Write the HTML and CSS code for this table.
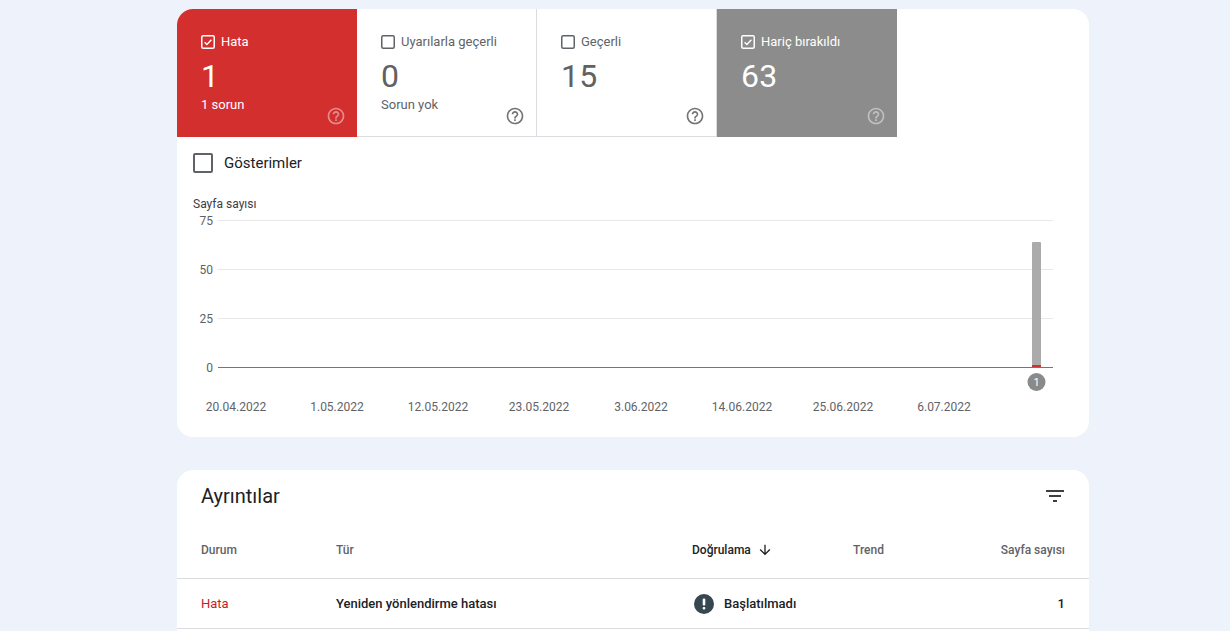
FILE: index.html
```html
<!DOCTYPE html>
<html lang="tr">
<head>
<meta charset="utf-8">
<title>Dizin kapsamı</title>
<link rel="stylesheet" href="styles.css">
</head>
<body>
<main class="page">
  <section class="card summary">
    <div class="tiles">
      <div class="tile tile-error">
        <div class="tile-label">
          <svg class="cb" viewBox="0 0 14 14"><rect x="0.75" y="0.75" width="12.5" height="12.5" rx="1.5" fill="none" stroke="currentColor" stroke-width="1.5"/><path d="M3.6 7.2l2.3 2.2 4.5-4.6" fill="none" stroke="currentColor" stroke-width="1.4"/></svg>
          <span>Hata</span>
        </div>
        <div class="tile-value">1</div>
        <div class="tile-foot">
          <span class="tile-sub">1 sorun</span>
          <svg class="help" viewBox="0 0 24 24"><path fill="currentColor" d="M11 18h2v-2h-2v2zm1-16C6.48 2 2 6.48 2 12s4.48 10 10 10 10-4.48 10-10S17.52 2 12 2zm0 18c-4.41 0-8-3.59-8-8s3.59-8 8-8 8 3.59 8 8-3.59 8-8 8zm0-14c-2.21 0-4 1.79-4 4h2c0-1.1.9-2 2-2s2 .9 2 2c0 2-3 1.75-3 5h2c0-2.25 3-2.5 3-5 0-2.21-1.79-4-4-4z"/></svg>
        </div>
      </div>
      <div class="tile tile-plain">
        <div class="tile-label">
          <svg class="cb" viewBox="0 0 14 14"><rect x="0.75" y="0.75" width="12.5" height="12.5" rx="1.5" fill="none" stroke="currentColor" stroke-width="1.5"/></svg>
          <span>Uyarılarla geçerli</span>
        </div>
        <div class="tile-value">0</div>
        <div class="tile-foot">
          <span class="tile-sub">Sorun yok</span>
          <svg class="help" viewBox="0 0 24 24"><path fill="currentColor" d="M11 18h2v-2h-2v2zm1-16C6.48 2 2 6.48 2 12s4.48 10 10 10 10-4.48 10-10S17.52 2 12 2zm0 18c-4.41 0-8-3.59-8-8s3.59-8 8-8 8 3.59 8 8-3.59 8-8 8zm0-14c-2.21 0-4 1.79-4 4h2c0-1.1.9-2 2-2s2 .9 2 2c0 2-3 1.75-3 5h2c0-2.25 3-2.5 3-5 0-2.21-1.79-4-4-4z"/></svg>
        </div>
      </div>
      <div class="tile tile-plain">
        <div class="tile-label">
          <svg class="cb" viewBox="0 0 14 14"><rect x="0.75" y="0.75" width="12.5" height="12.5" rx="1.5" fill="none" stroke="currentColor" stroke-width="1.5"/></svg>
          <span>Geçerli</span>
        </div>
        <div class="tile-value">15</div>
        <div class="tile-foot">
          <span class="tile-sub"></span>
          <svg class="help" viewBox="0 0 24 24"><path fill="currentColor" d="M11 18h2v-2h-2v2zm1-16C6.48 2 2 6.48 2 12s4.48 10 10 10 10-4.48 10-10S17.52 2 12 2zm0 18c-4.41 0-8-3.59-8-8s3.59-8 8-8 8 3.59 8 8-3.59 8-8 8zm0-14c-2.21 0-4 1.79-4 4h2c0-1.1.9-2 2-2s2 .9 2 2c0 2-3 1.75-3 5h2c0-2.25 3-2.5 3-5 0-2.21-1.79-4-4-4z"/></svg>
        </div>
      </div>
      <div class="tile tile-excluded">
        <div class="tile-label">
          <svg class="cb" viewBox="0 0 14 14"><rect x="0.75" y="0.75" width="12.5" height="12.5" rx="1.5" fill="none" stroke="currentColor" stroke-width="1.5"/><path d="M3.6 7.2l2.3 2.2 4.5-4.6" fill="none" stroke="currentColor" stroke-width="1.4"/></svg>
          <span>Hariç bırakıldı</span>
        </div>
        <div class="tile-value">63</div>
        <div class="tile-foot">
          <span class="tile-sub"></span>
          <svg class="help" viewBox="0 0 24 24"><path fill="currentColor" d="M11 18h2v-2h-2v2zm1-16C6.48 2 2 6.48 2 12s4.48 10 10 10 10-4.48 10-10S17.52 2 12 2zm0 18c-4.41 0-8-3.59-8-8s3.59-8 8-8 8 3.59 8 8-3.59 8-8 8zm0-14c-2.21 0-4 1.79-4 4h2c0-1.1.9-2 2-2s2 .9 2 2c0 2-3 1.75-3 5h2c0-2.25 3-2.5 3-5 0-2.21-1.79-4-4-4z"/></svg>
        </div>
      </div>
    </div>

    <label class="impressions">
      <span class="big-cb"></span>
      <span>Gösterimler</span>
    </label>

    <div class="chart">
      <div class="axis-title">Sayfa sayısı</div>
      <svg class="chart-svg" viewBox="0 0 880 210" width="880" height="210">
        <g class="grid">
          <line x1="25" y1="8.5" x2="860" y2="8.5"/>
          <line x1="25" y1="57.5" x2="860" y2="57.5"/>
          <line x1="25" y1="106.5" x2="860" y2="106.5"/>
        </g>
        <line class="zero" x1="25" y1="155.5" x2="860" y2="155.5"/>
        <g class="ylab">
          <text x="20" y="12.5">75</text>
          <text x="20" y="61.5">50</text>
          <text x="20" y="110.5">25</text>
          <text x="20" y="159.5">0</text>
        </g>
        <rect x="839" y="30" width="9" height="123" rx="1" fill="#ababab"/>
        <rect x="839" y="153" width="9" height="2" fill="#d32f2f"/>
        <circle cx="843.5" cy="170" r="9" fill="#8a8a8a"/>
        <text class="badge" x="843.5" y="174">1</text>
        <g class="xlab">
          <text x="43" y="199">20.04.2022</text>
          <text x="144" y="199">1.05.2022</text>
          <text x="245" y="199">12.05.2022</text>
          <text x="346" y="199">23.05.2022</text>
          <text x="448" y="199">3.06.2022</text>
          <text x="549" y="199">14.06.2022</text>
          <text x="650" y="199">25.06.2022</text>
          <text x="751" y="199">6.07.2022</text>
        </g>
      </svg>
    </div>
  </section>

  <section class="card details">
    <div class="details-head">
      <h2>Ayrıntılar</h2>
      <svg class="filter" viewBox="0 0 24 24"><path fill="currentColor" d="M10 18h4v-2h-4v2zM3 6v2h18V6H3zm3 7h12v-2H6v2z"/></svg>
    </div>
    <div class="row head-row">
      <span>Durum</span>
      <span>Tür</span>
      <span class="sorted">Doğrulama
        <svg class="arrow" viewBox="0 0 24 24"><path fill="currentColor" d="M20 12l-1.41-1.41L13 16.17V4h-2v12.17l-5.58-5.59L4 12l8 8 8-8z"/></svg>
      </span>
      <span>Trend</span>
      <span class="num">Sayfa sayısı</span>
    </div>
    <div class="row body-row">
      <span class="status-error">Hata</span>
      <span class="strong">Yeniden yönlendirme hatası</span>
      <span class="validation">
        <svg class="warn" viewBox="0 0 20 20"><circle cx="10" cy="10" r="10" fill="#37474f"/><rect x="8.7" y="4.5" width="2.6" height="7" rx="1" fill="#fff"/><rect x="8.7" y="13" width="2.6" height="2.6" rx="1" fill="#fff"/></svg>
        <span class="strong">Başlatılmadı</span>
      </span>
      <span></span>
      <span class="num strong">1</span>
    </div>
  </section>
</main>
</body>
</html>
```

FILE: styles.css
```css
* { box-sizing: border-box; }

html, body {
  margin: 0;
  padding: 0;
  background: #eef2fb;
  font-family: Roboto, "Noto Sans", Arial, sans-serif;
  color: #202124;
  overflow: hidden;
}

.page {
  padding: 9px 0 0 177px;
  display: flex;
  flex-direction: column;
  gap: 33px;
}

.card {
  width: 912px;
  background: #fff;
  border-radius: 16px;
  overflow: hidden;
}

/* summary tiles */
.tiles {
  display: flex;
  height: 128px;
}

.tile {
  width: 180px;
  height: 128px;
  padding: 25px 11px 8px 24px;
  display: flex;
  flex-direction: column;
}

.tile-error { background: #d32f2f; color: #fff; }
.tile-excluded { background: #8c8c8c; color: #fff; }
.tile-plain {
  color: #5f6368;
  border-bottom: 1px solid #dadce0;
  border-right: 1px solid #dadce0;
}

.tile-label {
  display: flex;
  align-items: center;
  gap: 6px;
  height: 16px;
  font-size: 13px;
  line-height: 16px;
}

.cb { width: 14px; height: 14px; flex: none; }

.tile-value {
  font-size: 32px;
  line-height: 38px;
  margin-top: 7px;
  letter-spacing: 0.2px;
}

.tile-plain .tile-value { color: #616161; }

.tile-foot {
  display: flex;
  justify-content: space-between;
  align-items: flex-start;
  margin-top: 2px;
}

.tile-sub {
  font-size: 13px;
  line-height: 16px;
}

.help {
  width: 20px;
  height: 20px;
  margin-top: 9px;
  flex: none;
}

.tile-error .help, .tile-excluded .help { color: rgba(255,255,255,0.45); }
.tile-plain .help { color: #757575; }

/* impressions toggle */
.impressions {
  display: flex;
  align-items: center;
  gap: 11px;
  margin: 16px 0 0 16px;
  font-size: 15px;
  line-height: 20px;
  color: #202124;
}

.big-cb {
  width: 20px;
  height: 20px;
  border: 2px solid #5f6368;
  border-radius: 2px;
}

/* chart */
.chart {
  padding: 23px 0 15px 16px;
}

.axis-title {
  font-size: 12px;
  line-height: 16px;
  color: #3c4043;
  height: 16px;
}

.chart-svg { display: block; }

.grid line { stroke: #e8e8e8; stroke-width: 1; }
.zero { stroke: #757575; stroke-width: 1; }

.ylab text {
  font-family: Roboto, Arial, sans-serif;
  font-size: 12px;
  fill: #616161;
  text-anchor: end;
}

.xlab text {
  font-family: Roboto, Arial, sans-serif;
  font-size: 12px;
  fill: #5f6368;
  text-anchor: middle;
}

.badge {
  font-family: Roboto, Arial, sans-serif;
  font-size: 11px;
  fill: #fff;
  text-anchor: middle;
}

/* details */
.details { min-height: 200px; }

.details-head {
  display: flex;
  justify-content: space-between;
  align-items: center;
  padding: 12px 22px 12px 24px;
}

.details-head h2 {
  margin: 0;
  font-size: 20px;
  line-height: 28px;
  font-weight: 400;
  color: #202124;
}

.filter { width: 24px; height: 24px; color: #3c4043; }

.row {
  display: grid;
  grid-template-columns: 135px 356px 161px 1fr 120px;
  align-items: center;
  padding: 0 24px;
  border-bottom: 1px solid #dadce0;
  font-size: 13px;
}

.head-row {
  height: 57px;
  font-size: 12px;
  font-weight: 500;
  color: #5f6368;
}

.body-row { height: 50px; }

.num { text-align: right; }

.sorted {
  display: flex;
  align-items: center;
  gap: 6px;
  color: #202124;
}

.arrow { width: 16px; height: 16px; }

.status-error { color: #c5221f; }

.strong { font-weight: 500; color: #202124; }

.validation {
  display: flex;
  align-items: center;
  gap: 10px;
}

.warn { width: 20px; height: 20px; margin-left: 2px; }
```
